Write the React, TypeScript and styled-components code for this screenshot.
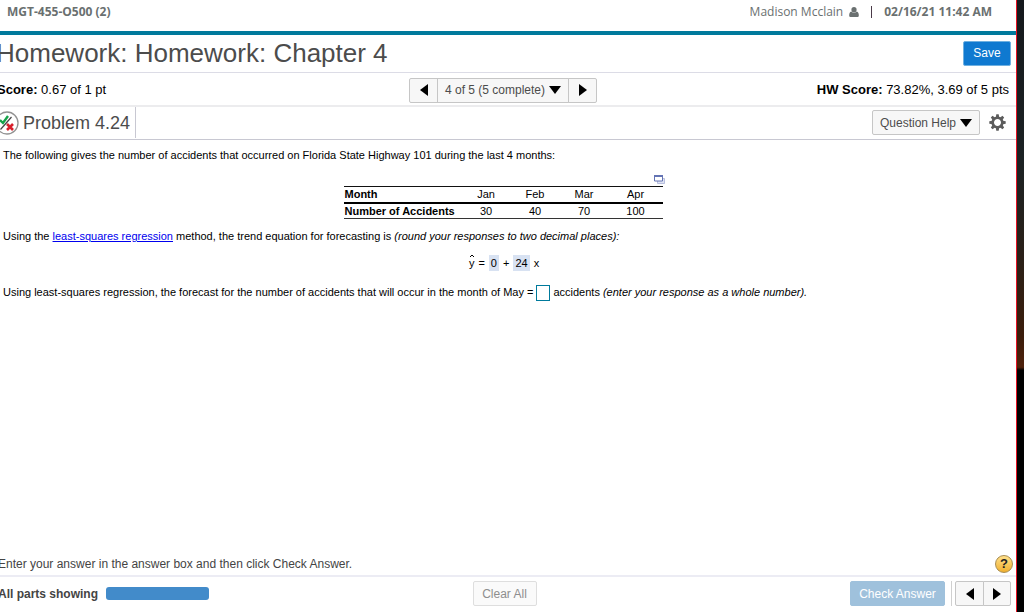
import React from "react";
import styled, { createGlobalStyle } from "styled-components";

const GlobalStyle = createGlobalStyle`
  * { box-sizing: border-box; }
  body { margin: 0; background: #fff; overflow: hidden; font-family: "Liberation Sans", Arial, sans-serif; }
  button, input { font-family: inherit; }
`;

const Desktop = styled.div`
  display: flex;
  height: 100vh;
  overflow: hidden;
`;

const Window = styled.div`
  flex: 1;
  min-width: 0;
  display: flex;
  flex-direction: column;
  overflow: hidden;
  background: #fff;
`;

const Backdrop = styled.div`
  flex: 0 0 8px;
  border-left: 1px solid #e81123;
  background: linear-gradient(#15181c 0%, #1c2224 26%, #2a2018 42%, #3b1d0b 55%, #4f210b 60%, #000 60.5%, #000 100%);
`;

const CourseBar = styled.header`
  display: flex;
  align-items: center;
  justify-content: space-between;
  height: 35px;
  padding: 0 24px 8px 7px;
  border-bottom: 4px solid #007a9c;
  font-family: "Open Sans", sans-serif;
  font-size: 12px;
  line-height: 16px;
  color: #6a7070;
`;

const UserInfo = styled.div`
  display: flex;
  align-items: center;

  svg { margin: 0 12px 0 6px; }
  strong { margin-left: 12px; }
`;

const Divider = styled.span`
  width: 1px;
  height: 12px;
  background: #4a3a48;
`;

const Player = styled.main`
  flex: 1;
  min-height: 0;
  display: flex;
  flex-direction: column;
  margin-left: -4px;
`;

const TitleRow = styled.div`
  display: flex;
  align-items: center;
  justify-content: space-between;
  height: 38px;
  padding: 0 5px 1px 0;
  border-bottom: 1px solid #dcdce6;
`;

const Title = styled.h1`
  margin: 0;
  font-size: 26px;
  line-height: 32px;
  font-weight: 400;
  color: #4c4c4c;
  white-space: nowrap;
`;

const ScoreRow = styled.div`
  display: grid;
  grid-template-columns: 1fr auto 1fr;
  align-items: center;
  height: 34px;
  padding: 2px 7px 0 1px;
  border-bottom: 2px solid #ececee;
  font-size: 13px;
  line-height: 16px;
  color: #000;
`;

const Score = styled.div<{ $end?: boolean }>`
  text-align: ${(p) => (p.$end ? "right" : "left")};
`;

const ProblemRow = styled.div`
  display: flex;
  align-items: center;
  height: 33px;
  padding: 0 10px 1px 0;
  border-bottom: 1px solid #c8c8d2;
`;

const ProblemName = styled.div`
  display: flex;
  align-items: center;
  align-self: stretch;
  gap: 4px;
  margin: 0 auto 0 -1px;
  padding-right: 5px;
  border-right: 1px solid #c8c8d2;

  h2 {
    margin: 0;
    font-size: 18px;
    line-height: 24px;
    font-weight: 400;
    color: #4c4c4c;
  }
`;

const Button = styled.button<{ $kind?: "primary" | "pale" | "muted"; $width?: number }>`
  display: flex;
  align-items: center;
  justify-content: center;
  gap: 4px;
  width: ${(p) => (p.$width ? `${p.$width}px` : "auto")};
  height: 25px;
  padding: 0;
  border: 1px solid
    ${(p) => (p.$kind === "primary" ? "#6fb0e0" : p.$kind === "pale" ? "#9fc1dc" : p.$kind === "muted" ? "#dedede" : "#c6c6c6")};
  border-radius: 2px;
  background: ${(p) => (p.$kind === "primary" ? "#0f79d0" : p.$kind === "pale" ? "#9fc1dc" : p.$kind === "muted" ? "#fafafa" : "#f7f7f7")};
  color: ${(p) => (p.$kind === "primary" || p.$kind === "pale" ? "#fff" : p.$kind === "muted" ? "#8e8e8e" : "#4c4c4c")};
  font-size: 12px;
  line-height: 16px;
  white-space: nowrap;
`;

const ButtonGroup = styled.div`
  display: flex;

  ${Button} + ${Button} { margin-left: -1px; }
  ${Button}:not(:last-child) { border-top-right-radius: 0; border-bottom-right-radius: 0; }
  ${Button}:not(:first-child) { border-top-left-radius: 0; border-bottom-left-radius: 0; }
`;

const IconButton = styled.button`
  display: flex;
  margin-left: 9px;
  padding: 0;
  border: 0;
  background: none;
`;

const Content = styled.section`
  flex: 1;
  min-height: 0;
  padding: 7px 11px 0 7px;
  font-size: 11px;
  line-height: 16px;
  color: #000;

  p { margin: 0; }
  a { color: #0000ee; }
`;

const TableBlock = styled.div`
  display: flex;
  flex-direction: column;
  align-items: flex-end;
  width: 321px;
  margin: 12px auto 9px;
`;

const DataTable = styled.table`
  width: 319px;
  margin-right: 2px;
  border-collapse: collapse;
  table-layout: fixed;
  border-top: 1px solid #111;
  border-bottom: 1px solid #333;

  tr + tr { border-top: 2px solid #000; }
  th, td { width: 49px; height: 16px; padding: 0; line-height: 14px; text-align: center; font-weight: 400; }
  th:first-child { width: 118px; padding-left: 1px; text-align: left; font-weight: 700; white-space: nowrap; }
  th:last-child, td:last-child { width: auto; }
`;

const PopupButton = styled(IconButton)`
  margin: 0 0 2px;
`;

const Equation = styled.div`
  display: flex;
  align-items: center;
  justify-content: center;
  gap: 4px;
  margin: 11px 0 13px;
`;

const Filled = styled.span`
  padding: 0 2px;
  background: #d8e2f2;
`;

const Hat = styled.span`
  position: relative;

  svg { position: absolute; left: 0; top: -1px; }
`;

const AnswerInput = styled.input`
  width: 14px;
  height: 16px;
  margin: 0 3px;
  padding: 0;
  border: 1px solid #007a9c;
  vertical-align: middle;
`;

const HintRow = styled.div`
  display: flex;
  align-items: center;
  justify-content: space-between;
  height: 22px;
  padding: 0 3px 0 2px;
  font-size: 12px;
  line-height: 16px;
  color: #444;
`;

const HelpButton = styled.button`
  width: 18px;
  height: 18px;
  padding: 0;
  border: 1px solid #a88c50;
  border-radius: 50%;
  background: linear-gradient(#ffe08a, #f0b030);
  color: #222;
  font-size: 13px;
  line-height: 16px;
  font-weight: 700;
`;

const Footer = styled.footer`
  display: grid;
  grid-template-columns: 1fr auto 1fr;
  align-items: center;
  height: 37px;
  padding: 0 5px 2px 2px;
  border-top: 2px solid #ececf4;
`;

const Progress = styled.div`
  display: flex;
  align-items: center;
  gap: 8px;
  font-size: 12px;
  line-height: 16px;
  font-weight: 700;
  color: #444;
`;

const ProgressBar = styled.span`
  width: 103px;
  height: 13px;
  border-radius: 3px;
  background: #428bca;
`;

const Actions = styled.div`
  display: flex;
  align-items: center;
  justify-content: flex-end;
`;

const ActionDivider = styled.span`
  width: 1px;
  height: 25px;
  margin: 0 3px 0 6px;
  background: #d0d0d0;
`;

const paths = { left: "M8 0V12L0 6Z", right: "M0 0V12L8 6Z", down: "M0 0H12L6 8Z" };

function Arrow({ dir }: { dir: keyof typeof paths }) {
  const down = dir === "down";
  return (
    <svg width={down ? 12 : 8} height={down ? 8 : 12} fill="#000" aria-hidden="true">
      <path d={paths[dir]} />
    </svg>
  );
}

function UserIcon() {
  return (
    <svg width="10" height="10" viewBox="0 0 10 10" fill="#6a7070" aria-hidden="true">
      <ellipse cx="5" cy="2.7" rx="2.6" ry="2.7" />
      <path d="M2.3 4.5Q5 7 7.7 4.5Q10 5.2 9.8 9Q9.6 10 8.6 10H1.4Q.4 10 .2 9Q0 5.2 2.3 4.5Z" />
    </svg>
  );
}

function PartialIcon() {
  return (
    <svg width="24" height="24" viewBox="0 0 24 24" fill="none" aria-hidden="true">
      <circle cx="12" cy="12" r="11" stroke="#929292" strokeWidth="1.3" fill="#fff" />
      <path d="M5 9L8 12L13 5" stroke="#16a34a" strokeWidth="2.4" />
      <path d="M5.5 18.5L16.5 6" stroke="#444" strokeWidth="1.2" />
      <path d="M12 13L18 19M18 13L12 19" stroke="#d81f2c" strokeWidth="2.6" />
    </svg>
  );
}

function GearIcon() {
  return (
    <svg width="17" height="17" viewBox="-8.5 -8.5 17 17" aria-hidden="true">
      <circle r="4.8" fill="none" stroke="#5c5c5c" strokeWidth="2.6" />
      {[0, 45, 90, 135, 180, 225, 270, 315].map((a) => (
        <path key={a} d="M-1.8 -5L-1.2 -8.2H1.2L1.8 -5Z" fill="#5c5c5c" transform={`rotate(${a})`} />
      ))}
    </svg>
  );
}

function PopupIcon() {
  return (
    <svg width="11" height="9" viewBox="0 0 11 9" fill="none" aria-hidden="true">
      <path d="M3.5 3.5H10.5V8.5H3.5Z" fill="#dfe3f2" stroke="#b7bedd" />
      <path d="M.5 .5H8.5V6H.5Z" fill="#fff" stroke="#6474b4" />
      <path d="M0 1H9" stroke="#6474b4" strokeWidth="2" />
    </svg>
  );
}

const data: [string, number][] = [
  ["Jan", 30],
  ["Feb", 40],
  ["Mar", 70],
  ["Apr", 100],
];

export default function App() {
  return (
    <Desktop>
      <GlobalStyle />
      <Window>
        <CourseBar>
          <strong>MGT-455-O500 (2)</strong>
          <UserInfo>
            <span>Madison Mcclain</span>
            <UserIcon />
            <Divider />
            <strong>02/16/21 11:42 AM</strong>
          </UserInfo>
        </CourseBar>
        <Player>
          <TitleRow>
            <Title>Homework: Homework: Chapter 4</Title>
            <Button $kind="primary" $width={48}>Save</Button>
          </TitleRow>
          <ScoreRow>
            <Score><strong>Score:</strong> 0.67 of 1 pt</Score>
            <ButtonGroup>
              <Button $width={29} aria-label="Previous question"><Arrow dir="left" /></Button>
              <Button $width={132}>4 of 5 (5 complete) <Arrow dir="down" /></Button>
              <Button $width={29} aria-label="Next question"><Arrow dir="right" /></Button>
            </ButtonGroup>
            <Score $end><strong>HW Score:</strong> 73.82%, 3.69 of 5 pts</Score>
          </ScoreRow>
          <ProblemRow>
            <ProblemName>
              <PartialIcon />
              <h2>Problem 4.24</h2>
            </ProblemName>
            <Button $width={108}>Question Help <Arrow dir="down" /></Button>
            <IconButton aria-label="Settings"><GearIcon /></IconButton>
          </ProblemRow>
          <Content>
            <p>The following gives the number of accidents that occurred on Florida State Highway 101 during the last 4 months:</p>
            <TableBlock>
              <PopupButton aria-label="Open table"><PopupIcon /></PopupButton>
              <DataTable>
                <tbody>
                  <tr>
                    <th scope="row">Month</th>
                    {data.map(([month]) => <th scope="col" key={month}>{month}</th>)}
                  </tr>
                  <tr>
                    <th scope="row">Number of Accidents</th>
                    {data.map(([month, count]) => <td key={month}>{count}</td>)}
                  </tr>
                </tbody>
              </DataTable>
            </TableBlock>
            <p>
              Using the <a href="#regression">least-squares regression</a> method, the trend equation for forecasting is{" "}
              <em>(round your responses to two decimal places):</em>
            </p>
            <Equation>
              <Hat>
                y
                <svg width="6" height="4" fill="none" stroke="#000" aria-hidden="true"><path d="M1 3L3 1L5 3" /></svg>
              </Hat>
              <span>=</span>
              <Filled>0</Filled>
              <span>+</span>
              <Filled>24</Filled>
              <span>x</span>
            </Equation>
            <p>
              <label htmlFor="forecast">
                Using least-squares regression, the forecast for the number of accidents that will occur in the month of May =
              </label>
              <AnswerInput id="forecast" type="text" />
              accidents <em>(enter your response as a whole number).</em>
            </p>
          </Content>
          <HintRow>
            <span>Enter your answer in the answer box and then click Check Answer.</span>
            <HelpButton aria-label="Help">?</HelpButton>
          </HintRow>
          <Footer>
            <Progress>All parts showing <ProgressBar /></Progress>
            <Button $kind="muted" $width={64}>Clear All</Button>
            <Actions>
              <Button $kind="pale" $width={95}>Check Answer</Button>
              <ActionDivider />
              <ButtonGroup>
                <Button $width={29} aria-label="Previous"><Arrow dir="left" /></Button>
                <Button $width={28} aria-label="Next"><Arrow dir="right" /></Button>
              </ButtonGroup>
            </Actions>
          </Footer>
        </Player>
      </Window>
      <Backdrop />
    </Desktop>
  );
}
